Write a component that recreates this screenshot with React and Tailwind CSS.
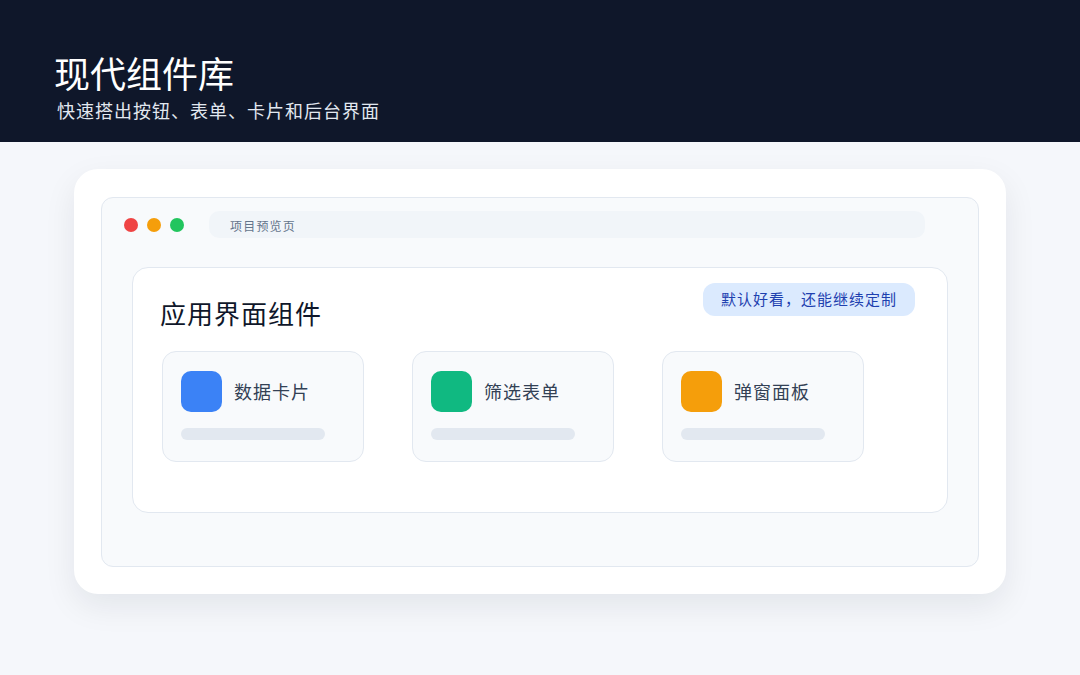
import React from "react";

const font = { fontFamily: '"Noto Sans CJK SC", "Noto Sans", sans-serif' };

const items = [
  { name: "数据卡片", color: "bg-[#3b82f6]" },
  { name: "筛选表单", color: "bg-[#10b981]" },
  { name: "弹窗面板", color: "bg-[#f59e0b]" },
];

export default function App() {
  return (
    <div className="min-h-screen bg-[#f5f7fb]" style={font}>
      <header className="h-[142px] bg-[#0f172a] pl-[56px] pt-[49px]">
        <h1 className="-ml-[2px] text-[36px] leading-[46px] text-white">现代组件库</h1>
        <p className="ml-[1px] mt-[2px] text-[18px] leading-[26px] tracking-[1px] text-[#e2e8f0]">快速搭出按钮、表单、卡片和后台界面</p>
      </header>

      <div className="pl-[74px] pt-[27px]">
        <div className="w-[932px] h-[425px] rounded-[24px] bg-white p-[27px] pt-[28px] shadow-[0_12px_32px_rgba(15,23,42,0.08)]">
          <div className="h-[370px] rounded-[12px] border border-[#e2e8f0] bg-[#f8fafc] pt-[13px]">
            <div className="flex items-center pl-[22px] pr-[53px]">
              <div className="flex gap-[9px]">
                <span className="block h-[14px] w-[14px] rounded-full bg-[#ef4444]" />
                <span className="block h-[14px] w-[14px] rounded-full bg-[#f59e0b]" />
                <span className="block h-[14px] w-[14px] rounded-full bg-[#22c55e]" />
              </div>
              <div className="ml-[25px] flex h-[27px] flex-1 items-center rounded-[10px] bg-[#f1f5f9] pl-[21px] pt-[3px] text-[12px] tracking-[1.2px] text-[#64748b]">
                项目预览页
              </div>
            </div>

            <div className="mx-[30px] mt-[29px] h-[246px] rounded-[16px] border border-[#e2e8f0] bg-white px-[29px] pt-[15px]">
              <div className="flex items-start justify-between pr-[3px]">
                <h2 className="mt-[13px] -ml-[2px] text-[26px] leading-[34px] tracking-[1px] text-[#0f172a]">应用界面组件</h2>
                <span className="flex h-[33px] items-center rounded-[12px] bg-[#dbeafe] px-[18px] text-[15px] tracking-[1px] text-[#1e40af]">
                  默认好看，还能继续定制
                </span>
              </div>
              <div className="mt-[21px] flex gap-[48px]">
                {items.map((it) => (
                  <div key={it.name} className="h-[111px] w-[202px] rounded-[14px] border border-[#e2e8f0] bg-[#f8fafc] px-[18px] pt-[19px]">
                    <div className="flex items-center gap-[12px]">
                      <span className={`block h-[41px] w-[41px] rounded-[10px] ${it.color}`} />
                      <span className="text-[18px] tracking-[1px] text-[#334155]">{it.name}</span>
                    </div>
                    <div className="mt-[16px] h-[12px] w-[144px] rounded-full bg-[#e2e8f0]" />
                  </div>
                ))}
              </div>
            </div>
          </div>
        </div>
      </div>
    </div>
  );
}
